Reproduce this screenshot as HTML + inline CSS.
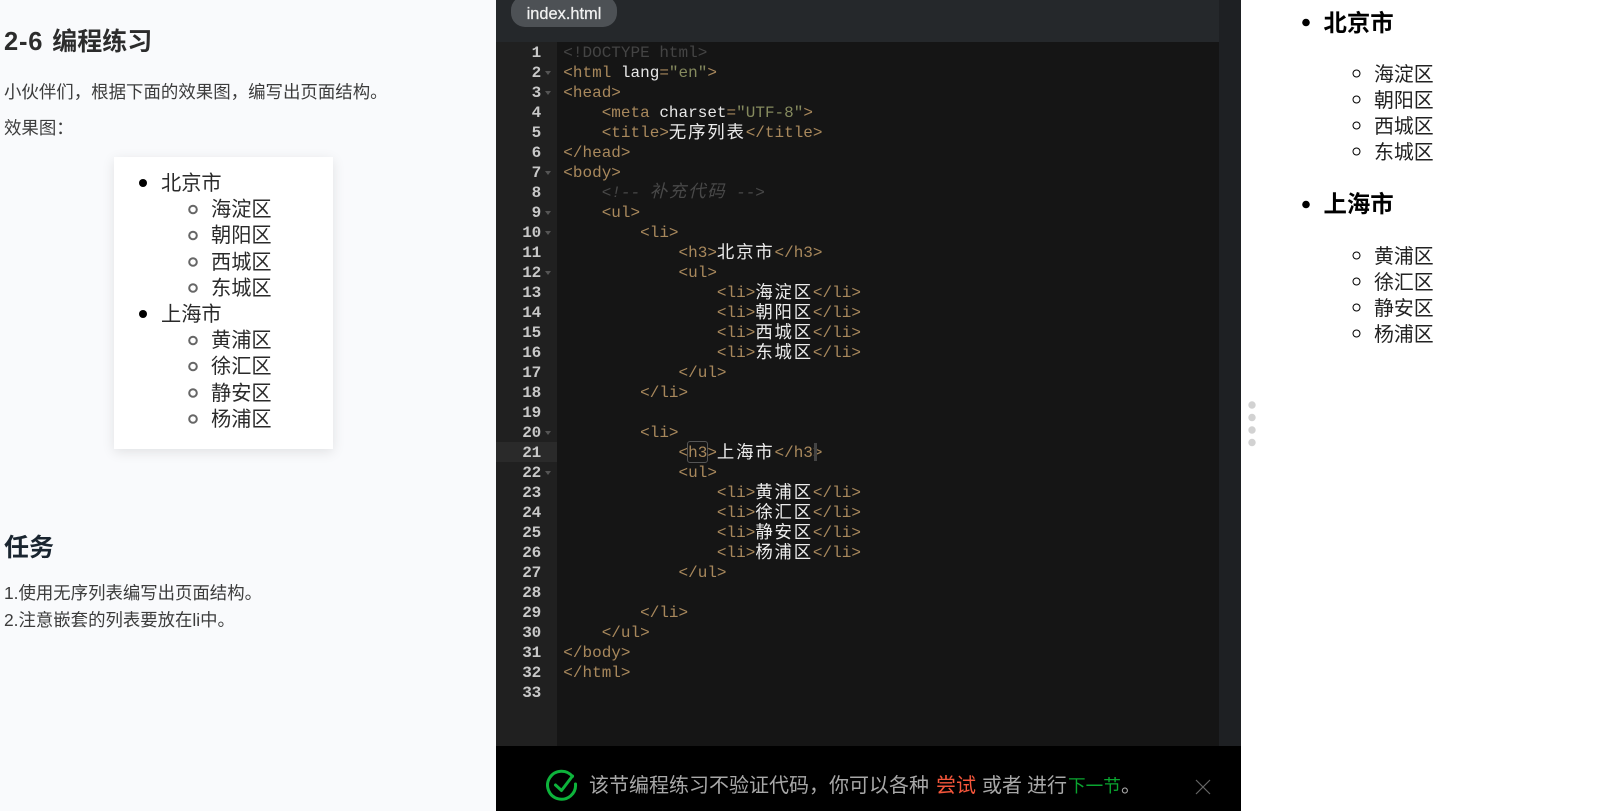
<!DOCTYPE html>
<html lang="zh"><head><meta charset="utf-8"><title>2-6 编程练习</title>
<style>
html,body{margin:0;padding:0;width:1609px;height:811px;overflow:hidden;background:#f9fafc;font-family:"Liberation Sans","Noto Sans CJK SC",sans-serif}
.a{position:absolute;white-space:nowrap}
.t{position:absolute;white-space:nowrap;line-height:26px;height:26px}
#ed{position:absolute;left:496px;top:0;width:745px;height:811px;background:#151515;overflow:hidden}
#top{position:absolute;left:0;top:0;width:745px;height:42px;background:#25282b}
#tab{position:absolute;left:15px;top:-4px;width:106px;height:31px;border-radius:14px;background:#4d5155;color:#f0f0f0;font-size:16.4px;line-height:36px;text-align:center;-webkit-text-stroke:.25px #f0f0f0}
#gut{position:absolute;left:0;top:42px;width:61px;height:704px;background:#202020}
#act{position:absolute;left:0;top:442px;width:61px;height:20px;background:#2a2a2a}
#sb{position:absolute;left:723px;top:0;width:22px;height:746px;background:#1e2023}
#bar{position:absolute;left:0;top:746px;width:745px;height:65px;background:#000}
.n{position:absolute;left:0;width:45px;height:20px;line-height:20px;text-align:right;font:bold 16px/20px "Liberation Mono",monospace;color:#c8c8c8;letter-spacing:-.2px}
.f{position:absolute;left:49px;width:0;height:0;border-left:3.5px solid transparent;border-right:3.5px solid transparent;border-top:4px solid #555}
.l{position:absolute;left:67.3px;height:20px;white-space:pre;font:16px/20px "Liberation Mono",monospace;color:#a8885c}
.w{color:#e8e8e8}.s{color:#858a5e}.g{color:#444}.c{color:#484848;font-style:italic}
.z{color:#ececec;font-family:"Noto Sans CJK SC",sans-serif;font-size:17.4px;letter-spacing:1.8px;line-height:0;position:relative;top:1px}
.zc{color:#484848;font-family:"Noto Sans CJK SC",sans-serif;font-size:17.4px;letter-spacing:1.8px;line-height:0;font-style:italic}
</style></head><body>

<div class="a" style="left:4px;top:25px;font-size:25px;line-height:34px;font-weight:bold;color:#2c2c2c"><span style="font-size:25.5px;letter-spacing:.8px;margin-right:9px">2-6</span>编程练习</div>
<div class="a" style="left:4px;top:79px;font-size:17.45px;line-height:26px;color:#3c3c3c">小伙伴们，根据下面的效果图，编写出页面结构。</div>
<div class="a" style="left:4px;top:115px;font-size:17.45px;line-height:26px;color:#3c3c3c">效果图：</div>

<div class="a" style="left:114px;top:157px;width:219px;height:292px;background:#fff;box-shadow:0 3px 12px rgba(0,0,0,.1)"></div>
<svg class="a" style="left:114px;top:157px" width="219" height="292" fill="none">
<g fill="#000"><circle cx="29" cy="26" r="4"/><circle cx="29" cy="157" r="4"/></g>
<g stroke="#666" stroke-width="2"><circle cx="79" cy="52.5" r="3.8"/><circle cx="79" cy="78.5" r="3.8"/><circle cx="79" cy="105" r="3.8"/><circle cx="79" cy="131" r="3.8"/><circle cx="79" cy="183.5" r="3.8"/><circle cx="79" cy="209.5" r="3.8"/><circle cx="79" cy="236" r="3.8"/><circle cx="79" cy="262" r="3.8"/></g>
</svg>
<div style="color:#2a2a2a;font-size:20.2px">
<div class="t" style="left:161px;top:171px">北京市</div>
<div class="t" style="left:211px;top:197px">海淀区</div>
<div class="t" style="left:211px;top:223px">朝阳区</div>
<div class="t" style="left:211px;top:249.5px">西城区</div>
<div class="t" style="left:211px;top:275.5px">东城区</div>
<div class="t" style="left:161px;top:302px">上海市</div>
<div class="t" style="left:211px;top:328px">黄浦区</div>
<div class="t" style="left:211px;top:354px">徐汇区</div>
<div class="t" style="left:211px;top:380.5px">静安区</div>
<div class="t" style="left:211px;top:406.5px">杨浦区</div>
</div>

<div class="a" style="left:4px;top:531px;font-size:25px;line-height:34px;font-weight:bold;color:#1a2530">任务</div>
<div class="a" style="left:4px;top:580px;font-size:17.4px;line-height:26px;color:#3c3c3c">1.使用无序列表编写出页面结构。</div>
<div class="a" style="left:4px;top:607px;font-size:17.4px;line-height:26px;color:#3c3c3c">2.注意嵌套的列表要放在li中。</div>

<div id="ed">
<div id="top"><div id="tab">index.html</div></div>
<div id="sb"></div>
<div id="gut"></div>
<div id="act"></div>

<div class="n" style="top:43px">1</div>
<div class="n" style="top:63px">2</div>
<div class="n" style="top:83px">3</div>
<div class="n" style="top:103px">4</div>
<div class="n" style="top:123px">5</div>
<div class="n" style="top:143px">6</div>
<div class="n" style="top:163px">7</div>
<div class="n" style="top:183px">8</div>
<div class="n" style="top:203px">9</div>
<div class="n" style="top:223px">10</div>
<div class="n" style="top:243px">11</div>
<div class="n" style="top:263px">12</div>
<div class="n" style="top:283px">13</div>
<div class="n" style="top:303px">14</div>
<div class="n" style="top:323px">15</div>
<div class="n" style="top:343px">16</div>
<div class="n" style="top:363px">17</div>
<div class="n" style="top:383px">18</div>
<div class="n" style="top:403px">19</div>
<div class="n" style="top:423px">20</div>
<div class="n" style="top:443px">21</div>
<div class="n" style="top:463px">22</div>
<div class="n" style="top:483px">23</div>
<div class="n" style="top:503px">24</div>
<div class="n" style="top:523px">25</div>
<div class="n" style="top:543px">26</div>
<div class="n" style="top:563px">27</div>
<div class="n" style="top:583px">28</div>
<div class="n" style="top:603px">29</div>
<div class="n" style="top:623px">30</div>
<div class="n" style="top:643px">31</div>
<div class="n" style="top:663px">32</div>
<div class="n" style="top:683px">33</div>

<div class="f" style="top:71px"></div>
<div class="f" style="top:91px"></div>
<div class="f" style="top:171px"></div>
<div class="f" style="top:211px"></div>
<div class="f" style="top:231px"></div>
<div class="f" style="top:271px"></div>
<div class="f" style="top:431px"></div>
<div class="f" style="top:471px"></div>

<div class="l g" style="top:43px">&lt;!DOCTYPE html&gt;</div>
<div class="l" style="top:63px">&lt;html <span class="w">lang</span>=<span class="s">"en"</span>&gt;</div>
<div class="l" style="top:83px">&lt;head&gt;</div>
<div class="l" style="top:103px">    &lt;meta <span class="w">charset</span>=<span class="s">"UTF-8"</span>&gt;</div>
<div class="l" style="top:123px">    &lt;title&gt;<span class="z">无序列表</span>&lt;/title&gt;</div>
<div class="l" style="top:143px">&lt;/head&gt;</div>
<div class="l" style="top:163px">&lt;body&gt;</div>
<div class="l c" style="top:183px">    &lt;!-- <span class="zc">补充代码</span> --&gt;</div>
<div class="l" style="top:203px">    &lt;ul&gt;</div>
<div class="l" style="top:223px">        &lt;li&gt;</div>
<div class="l" style="top:243px">            &lt;h3&gt;<span class="z">北京市</span>&lt;/h3&gt;</div>
<div class="l" style="top:263px">            &lt;ul&gt;</div>
<div class="l" style="top:283px">                &lt;li&gt;<span class="z">海淀区</span>&lt;/li&gt;</div>
<div class="l" style="top:303px">                &lt;li&gt;<span class="z">朝阳区</span>&lt;/li&gt;</div>
<div class="l" style="top:323px">                &lt;li&gt;<span class="z">西城区</span>&lt;/li&gt;</div>
<div class="l" style="top:343px">                &lt;li&gt;<span class="z">东城区</span>&lt;/li&gt;</div>
<div class="l" style="top:363px">            &lt;/ul&gt;</div>
<div class="l" style="top:383px">        &lt;/li&gt;</div>
<div class="l" style="top:423px">        &lt;li&gt;</div>
<div class="l" style="top:443px">            &lt;h3&gt;<span class="z">上海市</span>&lt;/h3&gt;</div>
<div class="l" style="top:463px">            &lt;ul&gt;</div>
<div class="l" style="top:483px">                &lt;li&gt;<span class="z">黄浦区</span>&lt;/li&gt;</div>
<div class="l" style="top:503px">                &lt;li&gt;<span class="z">徐汇区</span>&lt;/li&gt;</div>
<div class="l" style="top:523px">                &lt;li&gt;<span class="z">静安区</span>&lt;/li&gt;</div>
<div class="l" style="top:543px">                &lt;li&gt;<span class="z">杨浦区</span>&lt;/li&gt;</div>
<div class="l" style="top:563px">            &lt;/ul&gt;</div>
<div class="l" style="top:603px">        &lt;/li&gt;</div>
<div class="l" style="top:623px">    &lt;/ul&gt;</div>
<div class="l" style="top:643px">&lt;/body&gt;</div>
<div class="l" style="top:663px">&lt;/html&gt;</div>

<div class="a" style="left:191px;top:441px;width:19px;height:20px;border:1px solid #555;border-radius:3px"></div>
<div class="a" style="left:318px;top:443px;width:3px;height:18px;background:#444"></div>

<div id="bar">
<svg class="a" style="left:50px;top:21px" width="34" height="34" fill="none" stroke="#0db33b" stroke-width="3" stroke-linecap="round" stroke-linejoin="round">
<path d="M26.5 9.5 A14 14 0 1 0 29.5 17"/>
<path d="M9.5 18 L15.5 23.5 L26.5 9"/>
</svg>
<div class="a" style="left:93px;top:25px;font-size:20px;line-height:30px;color:#a8a8a8">该节编程练习不验证代码，你可以各种</div>
<div class="a" style="left:440px;top:25px;font-size:20px;line-height:30px;color:#f5563b">尝试</div>
<div class="a" style="left:486px;top:25px;font-size:20px;line-height:30px;color:#a8a8a8">或者</div>
<div class="a" style="left:531px;top:25px;font-size:20px;line-height:30px;color:#a8a8a8">进行</div>
<div class="a" style="left:572px;top:25px;font-size:17.6px;line-height:30px;color:#0aa530">下一节</div>
<div class="a" style="left:625px;top:25px;font-size:20px;line-height:30px;color:#a8a8a8">。</div>
<svg class="a" style="left:699px;top:33px" width="16" height="16" fill="none" stroke="#666" stroke-width="1.2"><path d="M1 1 L15 15 M15 1 L1 15"/></svg>
</div>
</div>

<div class="a" style="left:1241px;top:0;width:368px;height:811px;background:#fff"></div>
<svg class="a" style="left:1241px;top:0" width="368" height="811" fill="none">
<g fill="#000"><circle cx="65" cy="22.5" r="3.8"/><circle cx="65" cy="204.5" r="3.8"/></g>
<g stroke="#000" stroke-width="1"><circle cx="115.5" cy="73.5" r="3.5"/><circle cx="115.5" cy="99.5" r="3.5"/><circle cx="115.5" cy="125.5" r="3.5"/><circle cx="115.5" cy="151.5" r="3.5"/><circle cx="115.5" cy="255.5" r="3.5"/><circle cx="115.5" cy="281.5" r="3.5"/><circle cx="115.5" cy="307.5" r="3.5"/><circle cx="115.5" cy="333.5" r="3.5"/></g>
<g fill="#d2d2d2"><circle cx="11" cy="405" r="3.7"/><circle cx="11" cy="417.5" r="3.7"/><circle cx="11" cy="430" r="3.7"/><circle cx="11" cy="442.5" r="3.7"/></g>
</svg>
<div style="color:#000">
<div class="a" style="left:1323.5px;top:7.5px;font-size:23.4px;line-height:30px;font-weight:bold">北京市</div>
<div class="a" style="left:1323.5px;top:189px;font-size:23.4px;line-height:30px;font-weight:bold">上海市</div>
</div>
<div style="color:#222;font-size:19.9px">
<div class="t" style="left:1374px;top:62px">海淀区</div>
<div class="t" style="left:1374px;top:88px">朝阳区</div>
<div class="t" style="left:1374px;top:114px">西城区</div>
<div class="t" style="left:1374px;top:140px">东城区</div>
<div class="t" style="left:1374px;top:244px">黄浦区</div>
<div class="t" style="left:1374px;top:270px">徐汇区</div>
<div class="t" style="left:1374px;top:296px">静安区</div>
<div class="t" style="left:1374px;top:322px">杨浦区</div>
</div>
</body></html>
